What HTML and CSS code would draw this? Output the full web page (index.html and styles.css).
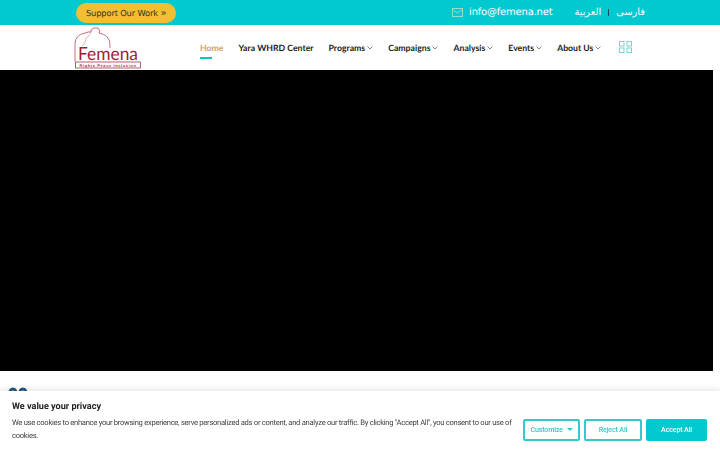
FILE: index.html
```html
<!DOCTYPE html>
<html lang="en">
<head>
    <meta charset="UTF-8">
    <meta name="viewport" content="width=device-width, initial-scale=1.0">
    <title>Femena</title>
    <link rel="stylesheet" href="styles.css">
</head>
<body>
<div class="top-bar">
    <a class="support-button" href="#">Support Our Work <span class="support-arrows">»</span></a>
    <div class="top-right">
        <svg class="mail-icon" width="11" height="9" viewBox="0 0 11 9" fill="none" stroke="#8fe0c8" stroke-width="1">
            <rect x="0.5" y="0.5" width="10" height="8"/>
            <path d="M0.5 1.5 L5.5 5 L10.5 1.5"/>
        </svg>
        <a class="top-mail" href="#">info@femena.net</a>
        <div class="languages">
            <a href="#" lang="ar">العربية</a>
            <span class="lang-divider"></span>
            <a href="#" lang="fa">فارسی</a>
        </div>
    </div>
</div>
<div class="header-bar">
    <svg class="logo" width="68" height="42" viewBox="0 0 68 42">
        <path d="M1 34.5 V17 Q1 8 11 6 L14 5 L17 5 L17 3 L20 1 L24 1 L26 4 L25 6 Q36 8 36 18 V21" fill="none" stroke="#a5384a" stroke-width="0.7"/>
        <path d="M17 5 L15 9 L12 11 L11 16 L8 19" fill="none" stroke="#c58a95" stroke-width="0.6"/>
        <text x="4" y="32.5" class="logo-name" textLength="60" lengthAdjust="spacingAndGlyphs">Femena</text>
        <rect x="1.5" y="35" width="65" height="6" fill="#fff" stroke="#a5384a" stroke-width="0.8"/>
        <text x="34" y="39.8" text-anchor="middle" class="logo-tag">Rights Peace Inclusion</text>
    </svg>
    <nav class="main-nav">
        <a class="nav-item active" href="#">Home</a>
        <a class="nav-item" href="#">Yara WHRD Center</a>
        <a class="nav-item" href="#">Programs<svg class="chevron" width="6" height="4" viewBox="0 0 6 4"><path d="M0.5 0.5 L3 3 L5.5 0.5" fill="none" stroke="#555" stroke-width="0.7"/></svg></a>
        <a class="nav-item" href="#">Campaigns<svg class="chevron" width="6" height="4" viewBox="0 0 6 4"><path d="M0.5 0.5 L3 3 L5.5 0.5" fill="none" stroke="#555" stroke-width="0.7"/></svg></a>
        <a class="nav-item" href="#">Analysis<svg class="chevron" width="6" height="4" viewBox="0 0 6 4"><path d="M0.5 0.5 L3 3 L5.5 0.5" fill="none" stroke="#555" stroke-width="0.7"/></svg></a>
        <a class="nav-item" href="#">Events<svg class="chevron" width="6" height="4" viewBox="0 0 6 4"><path d="M0.5 0.5 L3 3 L5.5 0.5" fill="none" stroke="#555" stroke-width="0.7"/></svg></a>
        <a class="nav-item" href="#">About Us<svg class="chevron" width="6" height="4" viewBox="0 0 6 4"><path d="M0.5 0.5 L3 3 L5.5 0.5" fill="none" stroke="#555" stroke-width="0.7"/></svg></a>
    </nav>
    <svg class="grid-icon" width="13" height="12" viewBox="0 0 13 12" fill="none" stroke="#7fd0d6" stroke-width="1">
        <rect x="0.5" y="0.5" width="4.5" height="4.5"/>
        <rect x="8" y="0.5" width="4.5" height="4.5"/>
        <rect x="0.5" y="7" width="4.5" height="4.5"/>
        <rect x="8" y="7" width="4.5" height="4.5"/>
    </svg>
</div>
<div class="hero-video"></div>
<div class="below-hero">
    <svg width="20" height="8" viewBox="0 0 20 8" fill="none" stroke="#25557f" stroke-width="3">
        <path d="M1.5 8 Q1.5 2 5 2 Q8 2 8.5 8"/>
        <path d="M11.5 8 Q11.5 2 15 2 Q18 2 18.5 8"/>
    </svg>
</div>

<div class="cookie-banner">
    <div class="cookie-title">We value your privacy</div>
    <div class="cookie-body">
        <p class="cookie-text">We use cookies to enhance your browsing experience, serve personalized ads or content, and analyze our traffic. By clicking "Accept All", you consent to our use of cookies.</p>
        <div class="cookie-buttons">
            <button class="cookie-btn customize">Customize <span class="caret"></span></button>
            <button class="cookie-btn reject">Reject All</button>
            <button class="cookie-btn accept">Accept All</button>
        </div>
    </div>
</div>
</body>
</html>
```

FILE: styles.css
```css
body, html {
    height: 100%;
    margin: 0;
    padding: 0;
    overflow: hidden;
    background: #fff;
    text-rendering: geometricPrecision;
}

a {
    text-decoration: none;
    color: inherit;
}

.top-bar {
    height: 25px;
    background: #00c9d0;
    display: flex;
    align-items: center;
    justify-content: space-between;
    padding: 0 75px 0 76px;
    font-family: "DejaVu Sans", sans-serif;
}

.support-button {
    width: 100px;
    box-sizing: border-box;
    background: #f1bf33;
    color: #33331a;
    border-radius: 10px;
    height: 20px;
    line-height: 20px;
    padding: 0 10px;
    font-size: 8.3px;
    letter-spacing: -0.15px;
    white-space: nowrap;
}

.support-arrows {
    font-size: 10px;
}

.top-right {
    display: flex;
    align-items: center;
    color: #fff;
    font-size: 10px;
}

.mail-icon {
    margin-right: 6px;
}

.top-mail {
    letter-spacing: -0.2px;
    margin-right: 22px;
}

.languages {
    display: flex;
    align-items: center;
    font-size: 9.8px;
}

.lang-divider {
    width: 1px;
    height: 7px;
    background: #17505a;
    margin: 0 7px;
}

.header-bar {
    height: 45px;
    display: flex;
    align-items: center;
    padding-left: 74px;
    background: #fff;
}

.logo {
    margin-right: 58px;
    flex-shrink: 0;
}

.logo-name {
    font-family: "Lato", sans-serif;
    font-size: 18px;
    font-weight: 400;
    fill: #a11c34;
}

.logo-tag {
    font-family: "Liberation Sans", sans-serif;
    font-size: 4px;
    font-weight: bold;
    fill: #a5384a;
    letter-spacing: 0.6px;
}

.main-nav {
    display: flex;
    gap: 15px;
}

.nav-item {
    position: relative;
    font-family: "Lato", sans-serif;
    font-size: 8.7px;
    font-weight: 700;
    color: #1c1c1c;
    white-space: nowrap;
}

.nav-item.active {
    color: #d1a16c;
}

.nav-item.active::after {
    content: "";
    position: absolute;
    left: 0;
    bottom: -6px;
    width: 12px;
    height: 2px;
    background: #13c3b5;
}

.chevron {
    margin-left: 2px;
    vertical-align: 1px;
}

.grid-icon {
    margin-left: 18px;
    margin-bottom: 2px;
}

.hero-video {
    height: 301px;
    margin-right: 7px;
    background: #000;
}

.below-hero {
    padding: 16px 0 0 8px;
}

.below-hero svg {
    display: block;
}

.cookie-banner {
    position: fixed;
    left: 0;
    right: 0;
    bottom: 0;
    height: 59px;
    box-sizing: border-box;
    padding: 10px 13px 0 12px;
    background: #fff;
    box-shadow: 0 -1px 6px rgba(0, 0, 0, 0.12);
    font-family: "Roboto", sans-serif;
}

.cookie-title {
    font-size: 9.1px;
    line-height: 12px;
    font-weight: 700;
    color: #212121;
    margin-bottom: 4px;
}

.cookie-body {
    display: flex;
    align-items: center;
    justify-content: space-between;
    gap: 9px;
}

.cookie-text {
    margin: 0;
    font-size: 7.6px;
    letter-spacing: -0.28px;
    line-height: 12.5px;
    color: #424242;
}

.cookie-buttons {
    display: flex;
    gap: 4px;
    flex-shrink: 0;
}

.cookie-btn {
    height: 22px;
    width: 58px;
    padding: 0;
    box-sizing: border-box;
    border: 2px solid #35c9cd;
    border-radius: 2px;
    background: #fff;
    color: #35c9cd;
    font-family: "Roboto", sans-serif;
    font-size: 7.2px;
    letter-spacing: -0.2px;
    font-weight: 500;
}

.cookie-btn.customize {
    width: 57px;
}

.cookie-btn.accept {
    width: 61px;
    background: #00c9d0;
    border-color: #00c9d0;
    color: #fff;
}

.caret {
    display: inline-block;
    margin-left: 2px;
    vertical-align: 1px;
    border-left: 3px solid transparent;
    border-right: 3px solid transparent;
    border-top: 3px solid #35c9cd;
}
```
